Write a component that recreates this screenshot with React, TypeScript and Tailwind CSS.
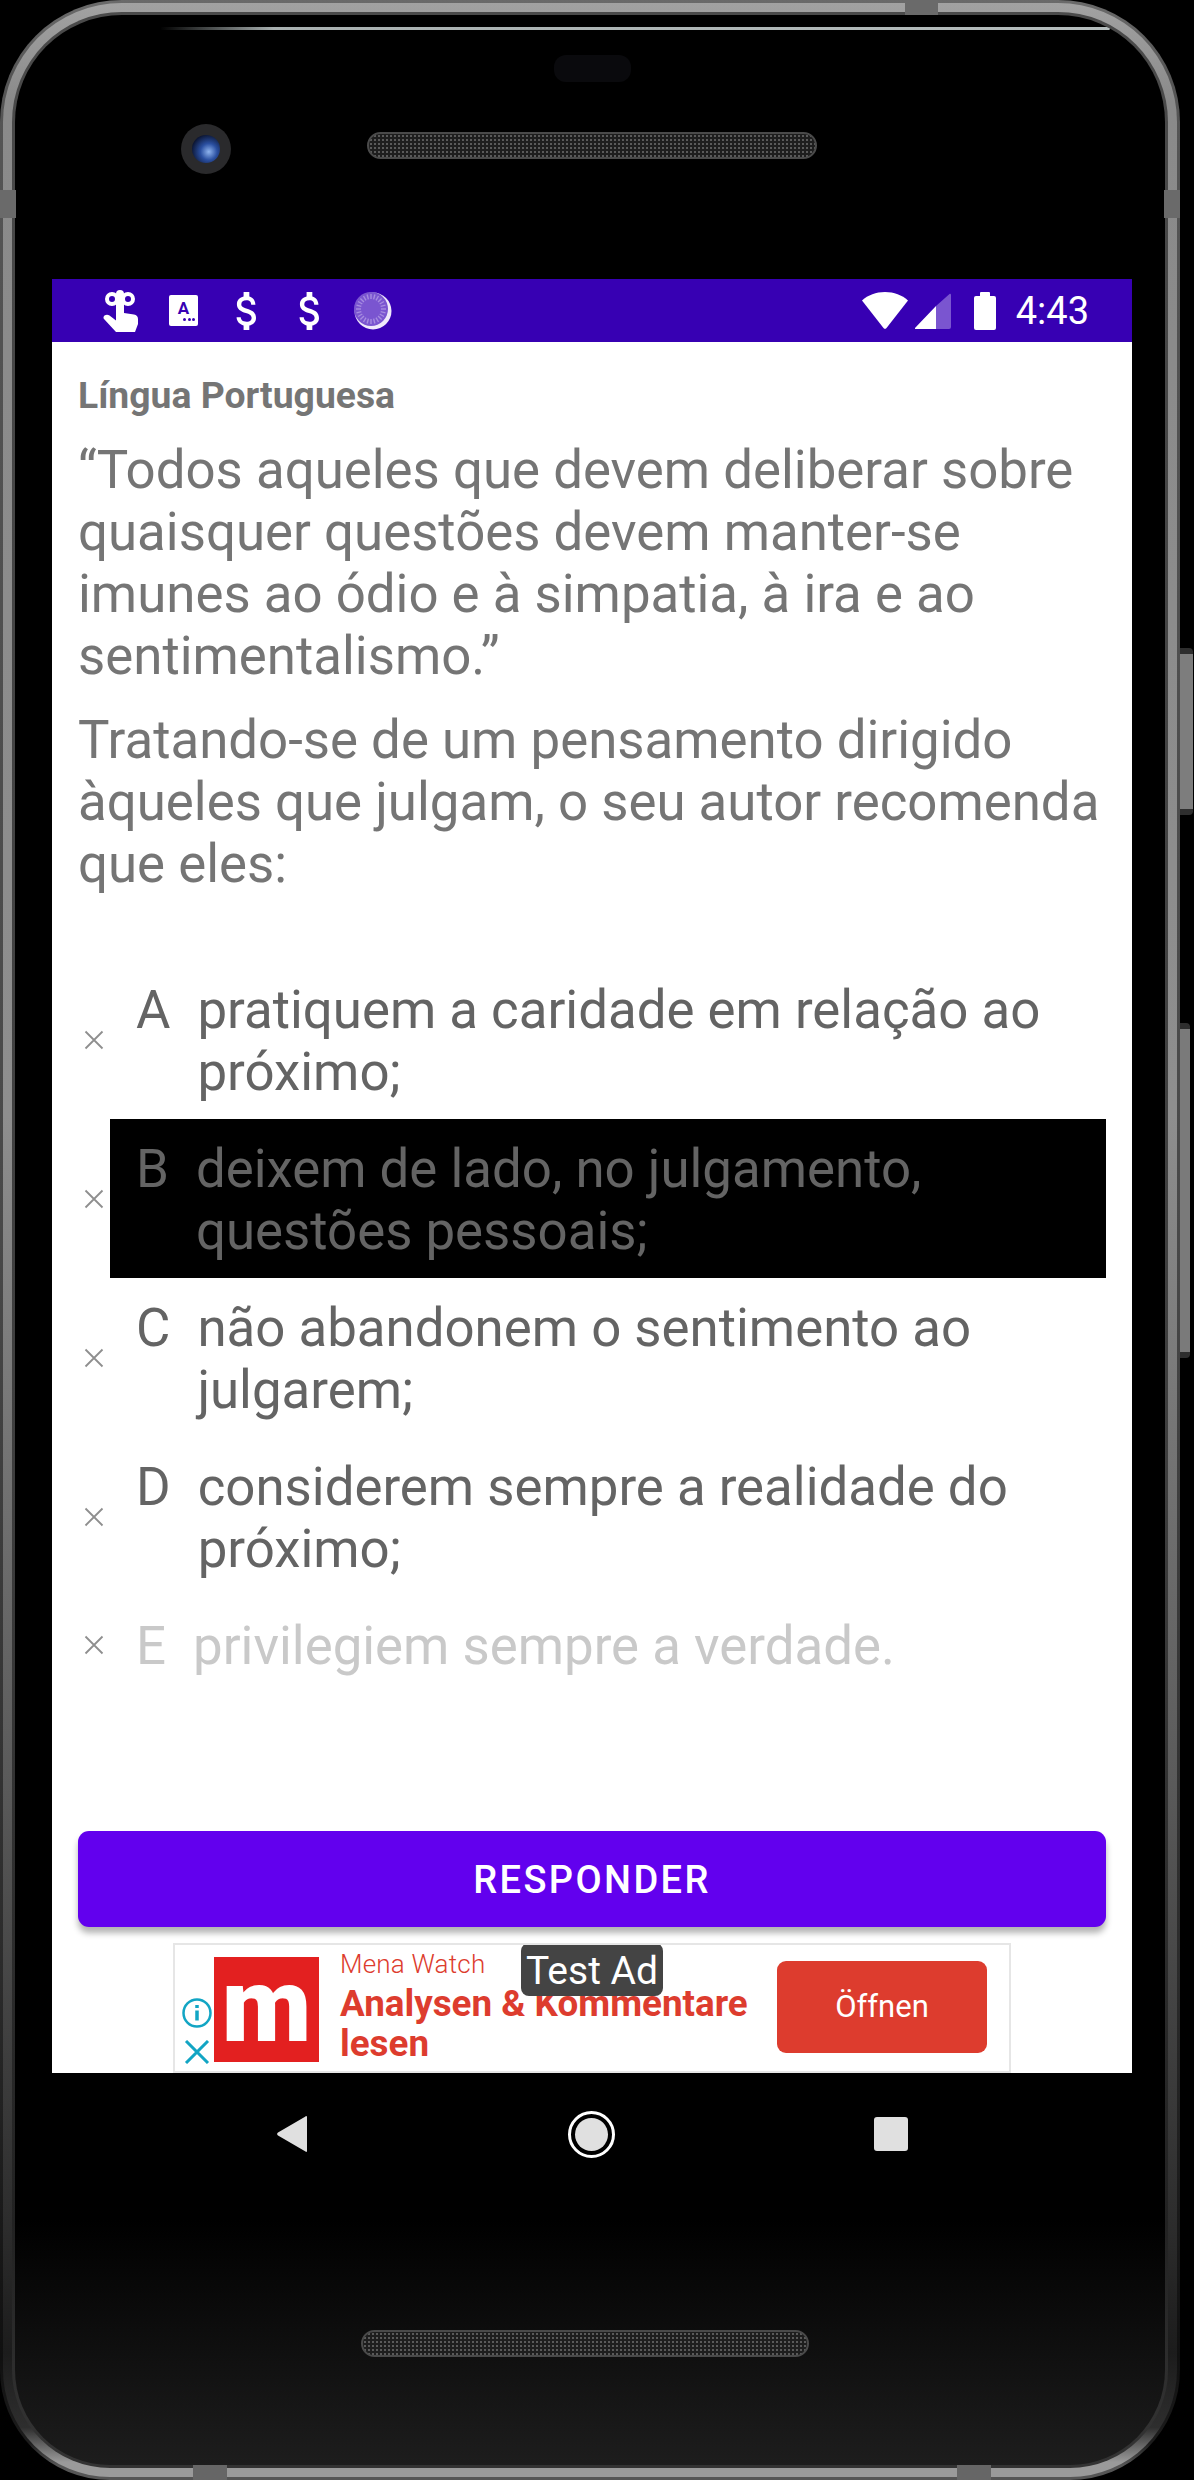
import React from 'react';

interface OptionProps {
  letter: string;
  text: string;
  selected?: boolean;
  disabled?: boolean;
}

const Cross = () => (
  <svg width="20" height="20" viewBox="0 0 20 20" className="shrink-0">
    <path d="M1.5 1.5 18.5 18.5M18.5 1.5 1.5 18.5" stroke="#8e8e8e" strokeWidth="1.8" fill="none" />
  </svg>
);

const Option: React.FC<OptionProps> = ({ letter, text, selected = false, disabled = false }) => {
  const tone = disabled ? 'text-[#c9c9c9]' : 'text-[#646464]';
  return (
    <div className="flex items-center">
      <div className="flex w-[32px] shrink-0 justify-center">
        <Cross />
      </div>
      <div className={`flex flex-1 gap-[27px] pb-[16.5px] pl-[26px] pr-[30px] pt-[18.5px] text-[52.8px] leading-[62px] ${tone} ${selected ? 'bg-black' : ''}`}>
        <span>{letter}</span>
        <span>{text}</span>
      </div>
    </div>
  );
};

const HandIcon = () => (
  <svg width="36" height="42" viewBox="0 0 36 42" fill="white">
    <circle cx="10" cy="9" r="5" fill="none" stroke="white" strokeWidth="4" />
    <circle cx="26" cy="9" r="5" fill="none" stroke="white" strokeWidth="4" />
    <rect x="14" y="0" width="8" height="24" rx="4" />
    <path d="M14 18h8v5l10 1.500c2.500.5 4 2 4 4.500v5l-3 8H14L2 29c-1-1-.5-2.500.5-3.500 1.500-1 3.500-1 5 0l6.500 5z" />
  </svg>
);

const CardIcon = () => (
  <div className="flex h-[31px] w-[29px] flex-col items-center rounded-[2px] bg-white pt-[5px]">
    <span className="text-[17px] font-bold leading-[16px] text-[#3700b3]">A</span>
    <div className="mt-[2px] flex w-full justify-end gap-[1.5px] pr-[3px]">
      <i className="size-[3px] rounded-full bg-[#3700b3]" />
      <i className="size-[3px] rounded-full bg-[#3700b3]" />
      <i className="size-[3px] rounded-full bg-[#3700b3]" />
    </div>
  </div>
);

const DollarIcon = () => (
  <svg width="21" height="38" viewBox="5.500 3 11 18" preserveAspectRatio="none" fill="white">
    <path d="M11.8 10.9c-2.27-.59-3-1.2-3-2.15 0-1.09 1.01-1.85 2.7-1.85 1.78 0 2.44.85 2.5 2.1h2.21c-.07-1.72-1.12-3.3-3.21-3.81V3h-3v2.16c-1.94.42-3.5 1.68-3.5 3.61 0 2.31 1.91 3.46 4.7 4.13 2.5.6 3 1.48 3 2.41 0 .69-.49 1.79-2.7 1.79-2.06 0-2.87-.92-2.98-2.1h-2.2c.12 2.19 1.76 3.42 3.68 3.83V21h3v-2.15c1.95-.37 3.5-1.5 3.5-3.55 0-2.84-2.43-3.81-4.7-4.4z" />
  </svg>
);

const SpinnerIcon = () => {
  const ticks = Array.from({ length: 24 }, (_, i) => i * 15);
  return (
    <svg width="38" height="38" viewBox="0 0 38 38">
      <circle cx="19" cy="19" r="18.500" fill="#efe9fb" />
      <circle cx="17" cy="17" r="17" fill="#7a55d0" />
      {ticks.map((deg) => (
        <line key={deg} x1="17" y1="2" x2="17" y2="7" stroke="#a78de0" strokeWidth="1.400" transform={`rotate(${deg} 17 17)`} />
      ))}
    </svg>
  );
};

const StatusBar = () => (
  <div className="flex h-[63px] shrink-0 items-center bg-[#3700b3] pl-[50px] pr-[43px]">
    <div className="flex items-center">
      <HandIcon />
      <div className="ml-[31px]"><CardIcon /></div>
      <div className="ml-[37px]"><DollarIcon /></div>
      <div className="ml-[42px]"><DollarIcon /></div>
      <div className="ml-[35px]"><SpinnerIcon /></div>
    </div>
    <div className="ml-auto flex items-center">
      <svg width="46" height="37" viewBox="0 0 46 37">
        <path d="M0 8.500C6 3 14 0 23 0s17 3 23 8.500L24.500 36a2 2 0 0 1-3 0z" fill="white" />
      </svg>
      <svg width="36" height="36" viewBox="0 0 36 36" className="ml-[7px]">
        <path d="M21 13 0 35c-.300.300 0 1 .500 1H21z" fill="white" />
        <path d="M36 1.500V34a2 2 0 0 1-2 2H21V13l13.500-12c.7-.5 1.500-.2 1.500.5z" fill="#7a55d0" />
      </svg>
      <div className="ml-[23px] flex flex-col items-center">
        <div className="h-[4px] w-[10px] rounded-t-[1px] bg-white" />
        <div className="h-[34px] w-[22px] rounded-[2px] bg-white" />
      </div>
      <span className="ml-[20px] text-[38px] leading-[44px] text-white">4:43</span>
    </div>
  </div>
);

const AdBanner = () => (
  <div className="relative mx-auto flex h-[130px] w-[838px] shrink-0 overflow-hidden border-2 border-[#e6e6e6] bg-white pl-[4px]">
    <div className="flex w-[35px] shrink-0 flex-col items-center pt-[52px]">
      <svg width="30" height="32" viewBox="0 0 30 32" fill="none" stroke="#12a5c4" strokeWidth="2.500">
        <circle cx="15" cy="16" r="13.500" />
        <path d="M15 13.500v10M15 8v3" strokeWidth="3.500" />
      </svg>
      <svg width="26" height="24" viewBox="0 0 26 24" fill="none" stroke="#12a5c4" strokeWidth="3" className="mt-[11px]">
        <path d="M2 1 24 23M24 1 2 23" />
      </svg>
    </div>
    <div className="mt-[12px] flex h-[105px] w-[105px] shrink-0 items-center justify-center bg-[#e32020]">
      <span className="-mt-[8px] text-[104px] font-black leading-none text-white">m</span>
    </div>
    <div className="ml-[21px] flex w-[420px] shrink-0 flex-col text-[#dd3c2e]">
      <span className="mt-[1px] text-[26px] font-light leading-[36px] tracking-[0.2px]">Mena Watch</span>
      <span className="mt-[2px] text-[36.800px] font-bold leading-[40px]">Analysen &amp; Kommentare lesen</span>
    </div>
    <div className="ml-[17px] mt-[16px] flex h-[92px] w-[210px] items-center justify-center rounded-[9px] bg-[#dd3c2e] text-[31px] text-white">
      Öffnen
    </div>
    <div className="absolute left-[346px] top-[-2px] flex h-[53px] w-[142px] items-center justify-center rounded-[8px] bg-[#444444] pt-[3px] text-[39px] text-white">
      Test Ad
    </div>
  </div>
);

const NavBar = () => (
  <div className="flex h-[122px] items-center">
    <div className="ml-[225px]">
      <svg width="30" height="36" viewBox="0 0 30 36">
        <path d="M30 1v34c0 .800-.8 1.200-1.500.600L1 19.500c-1.200-.8-1.200-2.200 0-3L28.500.400C29.200-.2 30 .2 30 1z" fill="#e0e0e0" />
      </svg>
    </div>
    <div className="ml-[261px] flex size-[47px] items-center justify-center rounded-full border-[3px] border-white">
      <div className="size-[33px] rounded-full bg-[#e0e0e0]" />
    </div>
    <div className="ml-[259px] size-[34px] rounded-[3px] bg-[#e0e0e0]" />
  </div>
);

const Speaker = ({ width }: { width: string }) => (
  <div className={`h-[27px] rounded-full border-2 border-[#4a4a4a] bg-[radial-gradient(#5a5a5a_1px,#1e1e1e_1px)] bg-[length:4px_4px] ${width}`} />
);

export default function App() {
  return (
    <div className="relative h-[2480px] w-[1194px] overflow-hidden bg-black [font-family:Roboto,sans-serif]">
      {/* volume and power keys stick out of the frame */}
      <div className="absolute left-[1178px] top-[648px] h-[167px] w-[15px] rounded-r-[4px] border-y-[6px] border-[#2e2e2e] bg-[#7d7d7d]" />
      <div className="absolute left-[1178px] top-[1023px] h-[335px] w-[12px] rounded-r-[4px] border-y-[6px] border-[#2e2e2e] bg-[#7a7a7a]" />

      <div className="relative h-[2480px] w-[1180px] rounded-b-[110px] rounded-t-[122px] bg-[linear-gradient(180deg,#6a6a6a_0%,#555555_3%,#484848_50%,#2a2a2a_80%,#101010_95%,#1c1c1c_98.500%,#555555_99.400%)] p-[3px]">
        <div className="h-full rounded-b-[107px] rounded-t-[119px] bg-[linear-gradient(180deg,#a2a2a2_0%,#8a8a8a_4%,#8e8e8e_45%,#5a5a5a_72%,#2c2c2c_90%,#1c1c1c_95%,#2e2e2e_98%,#9a9a9a_99.400%)] p-[9px]">
          <div className="h-full rounded-b-[98px] rounded-t-[110px] bg-[linear-gradient(180deg,#4a4a4a_0%,#3e3e3e_60%,#222222_90%,#333333_99%)] p-[3px]">
            <div className="relative flex h-full flex-col overflow-hidden rounded-b-[95px] rounded-t-[107px] bg-[linear-gradient(180deg,#000000_0%,#000000_90%,#1d1d1d_100%)] pl-[37px] pr-[33px]">
              <div className="absolute left-[145px] right-[55px] top-[12px] h-[3px] rounded-full bg-[linear-gradient(90deg,transparent_0%,#a8b0b0_12%,#b4bcbc_100%)]" />

              <div className="relative flex h-[264px] shrink-0 flex-col items-center">
                <div className="mt-[40px] h-[27px] w-[77px] rounded-[12px] bg-[#0a0a0d]" />
                <div className="mt-[50px]"><Speaker width="w-[450px]" /></div>
                <div className="absolute left-[129px] top-[109px] flex size-[50px] items-center justify-center rounded-full bg-[#2a2a2c]">
                  <div className="size-[28px] rounded-full bg-[radial-gradient(circle_at_60%_60%,#8fb4ee_0%,#2a4fa0_35%,#0b1430_75%)]" />
                </div>
              </div>

              <div className="flex h-[1794px] shrink-0 flex-col bg-white">
                <StatusBar />
                <div className="flex flex-1 flex-col">
                  <div className="px-[26px] pt-[32px]">
                    <h1 className="text-[37.300px] font-bold leading-[42px] text-[#757575]">Língua Portuguesa</h1>
                    <p className="mt-[23px] text-[52.8px] leading-[62px] text-[#757575]">
                      “Todos aqueles que devem deliberar sobre quaisquer questões devem manter-se imunes ao ódio e à simpatia, à ira e ao sentimentalismo.”
                    </p>
                    <p className="mt-[22px] text-[52.8px] leading-[62px] text-[#757575]">
                      Tratando-se de um pensamento dirigido àqueles que julgam, o seu autor recomenda que eles:
                    </p>
                  </div>
                  <div className="mt-[65px] pl-[26px] pr-[26px]">
                    <Option letter="A" text="pratiquem a caridade em relação ao próximo;" />
                    <Option letter="B" text="deixem de lado, no julgamento, questões pessoais;" selected />
                    <Option letter="C" text="não abandonem o sentimento ao julgarem;" />
                    <Option letter="D" text="considerem sempre a realidade do próximo;" />
                    <Option letter="E" text="privilegiem sempre a verdade." disabled />
                  </div>
                  <div className="mt-auto px-[26px]">
                    <button className="flex h-[96px] w-full items-center justify-center rounded-[11px] bg-[#6200ee] pt-[2px] text-[38px] font-medium uppercase tracking-[2.400px] text-white shadow-[0_6px_6px_rgba(0,0,0,0.3)]">
                      Responder
                    </button>
                  </div>
                  <div className="mt-[16px]"><AdBanner /></div>
                </div>
              </div>

              <NavBar />
              <div className="mt-[135px] flex justify-center pr-[14px]">
                <Speaker width="w-[448px]" />
              </div>
            </div>
          </div>
        </div>

        {/* antenna breaks on the metal band */}
        <div className="absolute left-0 top-[190px] h-[28px] w-[16px] bg-[#6a6a6a]" />
        <div className="absolute right-0 top-[190px] h-[28px] w-[16px] bg-[#6a6a6a]" />
        <div className="absolute left-[905px] top-0 h-[15px] w-[33px] bg-[#6a6a6a]" />
        <div className="absolute bottom-0 left-[193px] h-[15px] w-[34px] bg-[#666666]" />
        <div className="absolute bottom-0 left-[957px] h-[15px] w-[34px] bg-[#666666]" />
      </div>
    </div>
  );
}
